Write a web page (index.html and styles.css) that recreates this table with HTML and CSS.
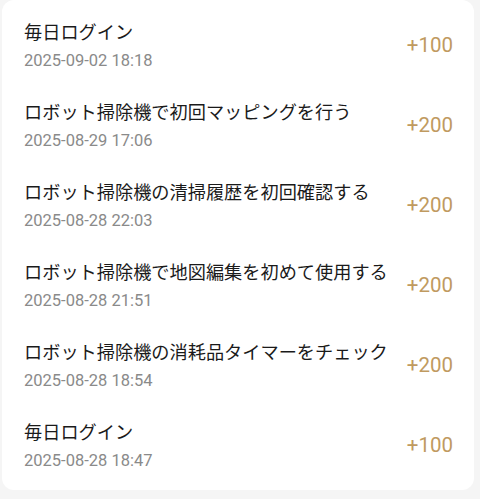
FILE: index.html
```html
<!DOCTYPE html>
<html lang="ja">
<head>
<meta charset="utf-8">
<link rel="stylesheet" href="styles.css">
</head>
<body>
<div class="card">
  <div class="row"><div class="info"><div class="title">毎日ログイン</div><div class="date">2025-09-02 18:18</div></div><div class="pts">+100</div></div>
  <div class="row"><div class="info"><div class="title">ロボット掃除機で初回マッピングを行う</div><div class="date">2025-08-29 17:06</div></div><div class="pts">+200</div></div>
  <div class="row"><div class="info"><div class="title">ロボット掃除機の清掃履歴を初回確認する</div><div class="date">2025-08-28 22:03</div></div><div class="pts">+200</div></div>
  <div class="row"><div class="info"><div class="title">ロボット掃除機で地図編集を初めて使用する</div><div class="date">2025-08-28 21:51</div></div><div class="pts">+200</div></div>
  <div class="row"><div class="info"><div class="title">ロボット掃除機の消耗品タイマーをチェック</div><div class="date">2025-08-28 18:54</div></div><div class="pts">+200</div></div>
  <div class="row"><div class="info"><div class="title">毎日ログイン</div><div class="date">2025-08-28 18:47</div></div><div class="pts">+100</div></div>
</div>
</body>
</html>
```
FILE: styles.css
```css
html, body {
  margin: 0;
  padding: 0;
  background: #f5f5f5;
  font-family: Roboto, "Noto Sans CJK JP", sans-serif;
}
body {
  padding: 0 6px 0 2px;
}
.card {
  background: #ffffff;
  border-radius: 12px;
  padding: 5px 0;
}
.row {
  display: flex;
  align-items: center;
  justify-content: space-between;
  height: 80px;
  padding: 0 21px 0 22px;
  box-sizing: border-box;
}
.info {
  display: flex;
  flex-direction: column;
  gap: 7px;
}
.title {
  font-size: 18.2px;
  line-height: 24px;
  color: #1a1a1a;
  font-family: "Noto Sans CJK JP", sans-serif;
}
.date {
  font-size: 16.5px;
  line-height: 22px;
  color: #8a8a8a;
}
.pts {
  font-size: 20.5px;
  color: #c09a60;
}
```
